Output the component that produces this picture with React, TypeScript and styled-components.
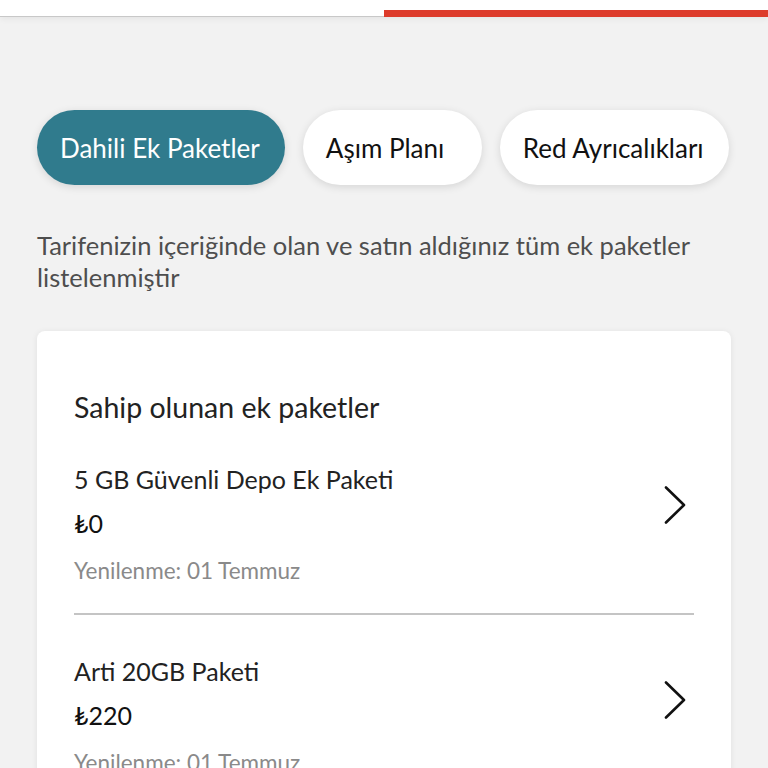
import React from "react";
import styled, { createGlobalStyle } from "styled-components";

const Global = createGlobalStyle`
  html, body { margin: 0; padding: 0; background: #f2f2f2; }
  body { font-family: Lato, "Noto Sans", sans-serif; color: #1a1a1a; }
  * { box-sizing: border-box; }
`;

const Page = styled.div`
  width: 768px;
  height: 768px;
  overflow: hidden;
  background: #f2f2f2;
  display: flex;
  flex-direction: column;
`;

const TopBar = styled.div`
  flex-shrink: 0;
  height: 17px;
  background: #fff;
  border-bottom: 1px solid #c8c8c8;
  display: flex;
  align-items: flex-end;
  justify-content: flex-end;
  box-shadow: 0 2px 6px rgba(0,0,0,0.06);
`;

const Progress = styled.div`
  width: 384px;
  height: 7px;
  background: #dd3b2b;
  margin-bottom: -1px;
`;

const Content = styled.div`
  flex-shrink: 0;
  padding: 93px 37px 0 37px;
  display: flex;
  flex-direction: column;
`;

const Tabs = styled.div`
  display: flex;
  gap: 18px;
`;

const Tab = styled.div<{ $active?: boolean; $minWidth?: number }>`
  height: 75px;
  min-width: ${(p) => (p.$minWidth ? `${p.$minWidth}px` : "0")};
  padding: 0 25px 0 23px;
  border-radius: 38px;
  display: flex;
  align-items: center;
  justify-content: flex-start;
  font-size: 26px;
  white-space: nowrap;
  background: ${(p) => (p.$active ? "#307b8d" : "#fff")};
  color: ${(p) => (p.$active ? "#fff" : "#111")};
  box-shadow: 0 2px 8px rgba(0,0,0,0.12);
`;

const Description = styled.p`
  margin: 44px 0 0 0;
  font-size: 25.5px;
  line-height: 32px;
  color: #4e4e4e;
`;

const Card = styled.div`
  margin-top: 38px;
  background: #fff;
  border-radius: 8px;
  box-shadow: 0 1px 6px rgba(0,0,0,0.08);
  padding: 58px 37px 0 37px;
  display: flex;
  flex-direction: column;
`;

const CardTitle = styled.div`
  font-size: 28.5px;
  line-height: 36px;
  color: #222;
`;

const Item = styled.div<{ $divider?: boolean }>`
  display: flex;
  align-items: flex-start;
  justify-content: space-between;
  padding: ${(p) => (p.$divider ? "38px 0 28px" : "40px 0 26px")};
  border-bottom: ${(p) => (p.$divider ? "2px solid #c4c4c4" : "none")};
`;

const ItemText = styled.div`
  display: flex;
  flex-direction: column;
`;

const ItemName = styled.div`
  font-size: 25px;
  line-height: 32px;
  color: #222;
`;

const Price = styled.div`
  font-size: 25px;
  line-height: 32px;
  margin-top: 12px;
  color: #111;
`;

const Renewal = styled.div`
  font-size: 22.5px;
  line-height: 28px;
  margin-top: 18px;
  color: #8a8a8a;
`;

const ChevronWrap = styled.div<{ $offset: number }>`
  margin-top: ${(p) => p.$offset}px;
  margin-right: 8px;
  display: flex;
`;

const Chevron = ({ offset }: { offset: number }) => (
  <ChevronWrap $offset={offset}>
    <svg width="22" height="38" viewBox="0 0 22 38" fill="none">
      <path d="M2 1.5 L20 19 L2 36.5" stroke="#111" strokeWidth="2.6" strokeLinecap="round" strokeLinejoin="round" />
    </svg>
  </ChevronWrap>
);

const items = [
  { name: "5 GB Güvenli Depo Ek Paketi", price: "₺0", renew: "Yenilenme: 01 Temmuz" },
  { name: "Arti 20GB Paketi", price: "₺220", renew: "Yenilenme: 01 Temmuz" },
];

export default function App() {
  return (
    <Page>
      <Global />
      <TopBar>
        <Progress />
      </TopBar>
      <Content>
        <Tabs>
          <Tab $active>Dahili Ek Paketler</Tab>
          <Tab $minWidth={179}>Aşım Planı</Tab>
          <Tab>Red Ayrıcalıkları</Tab>
        </Tabs>
        <Description>
          Tarifenizin içeriğinde olan ve satın aldığınız tüm ek paketler listelenmiştir
        </Description>
        <Card>
          <CardTitle>Sahip olunan ek paketler</CardTitle>
          {items.map((it, i) => (
            <Item key={i} $divider={i === 0}>
              <ItemText>
                <ItemName>{it.name}</ItemName>
                <Price>{it.price}</Price>
                <Renewal>{it.renew}</Renewal>
              </ItemText>
              <Chevron offset={i === 0 ? 23 : 26} />
            </Item>
          ))}
        </Card>
      </Content>
    </Page>
  );
}
